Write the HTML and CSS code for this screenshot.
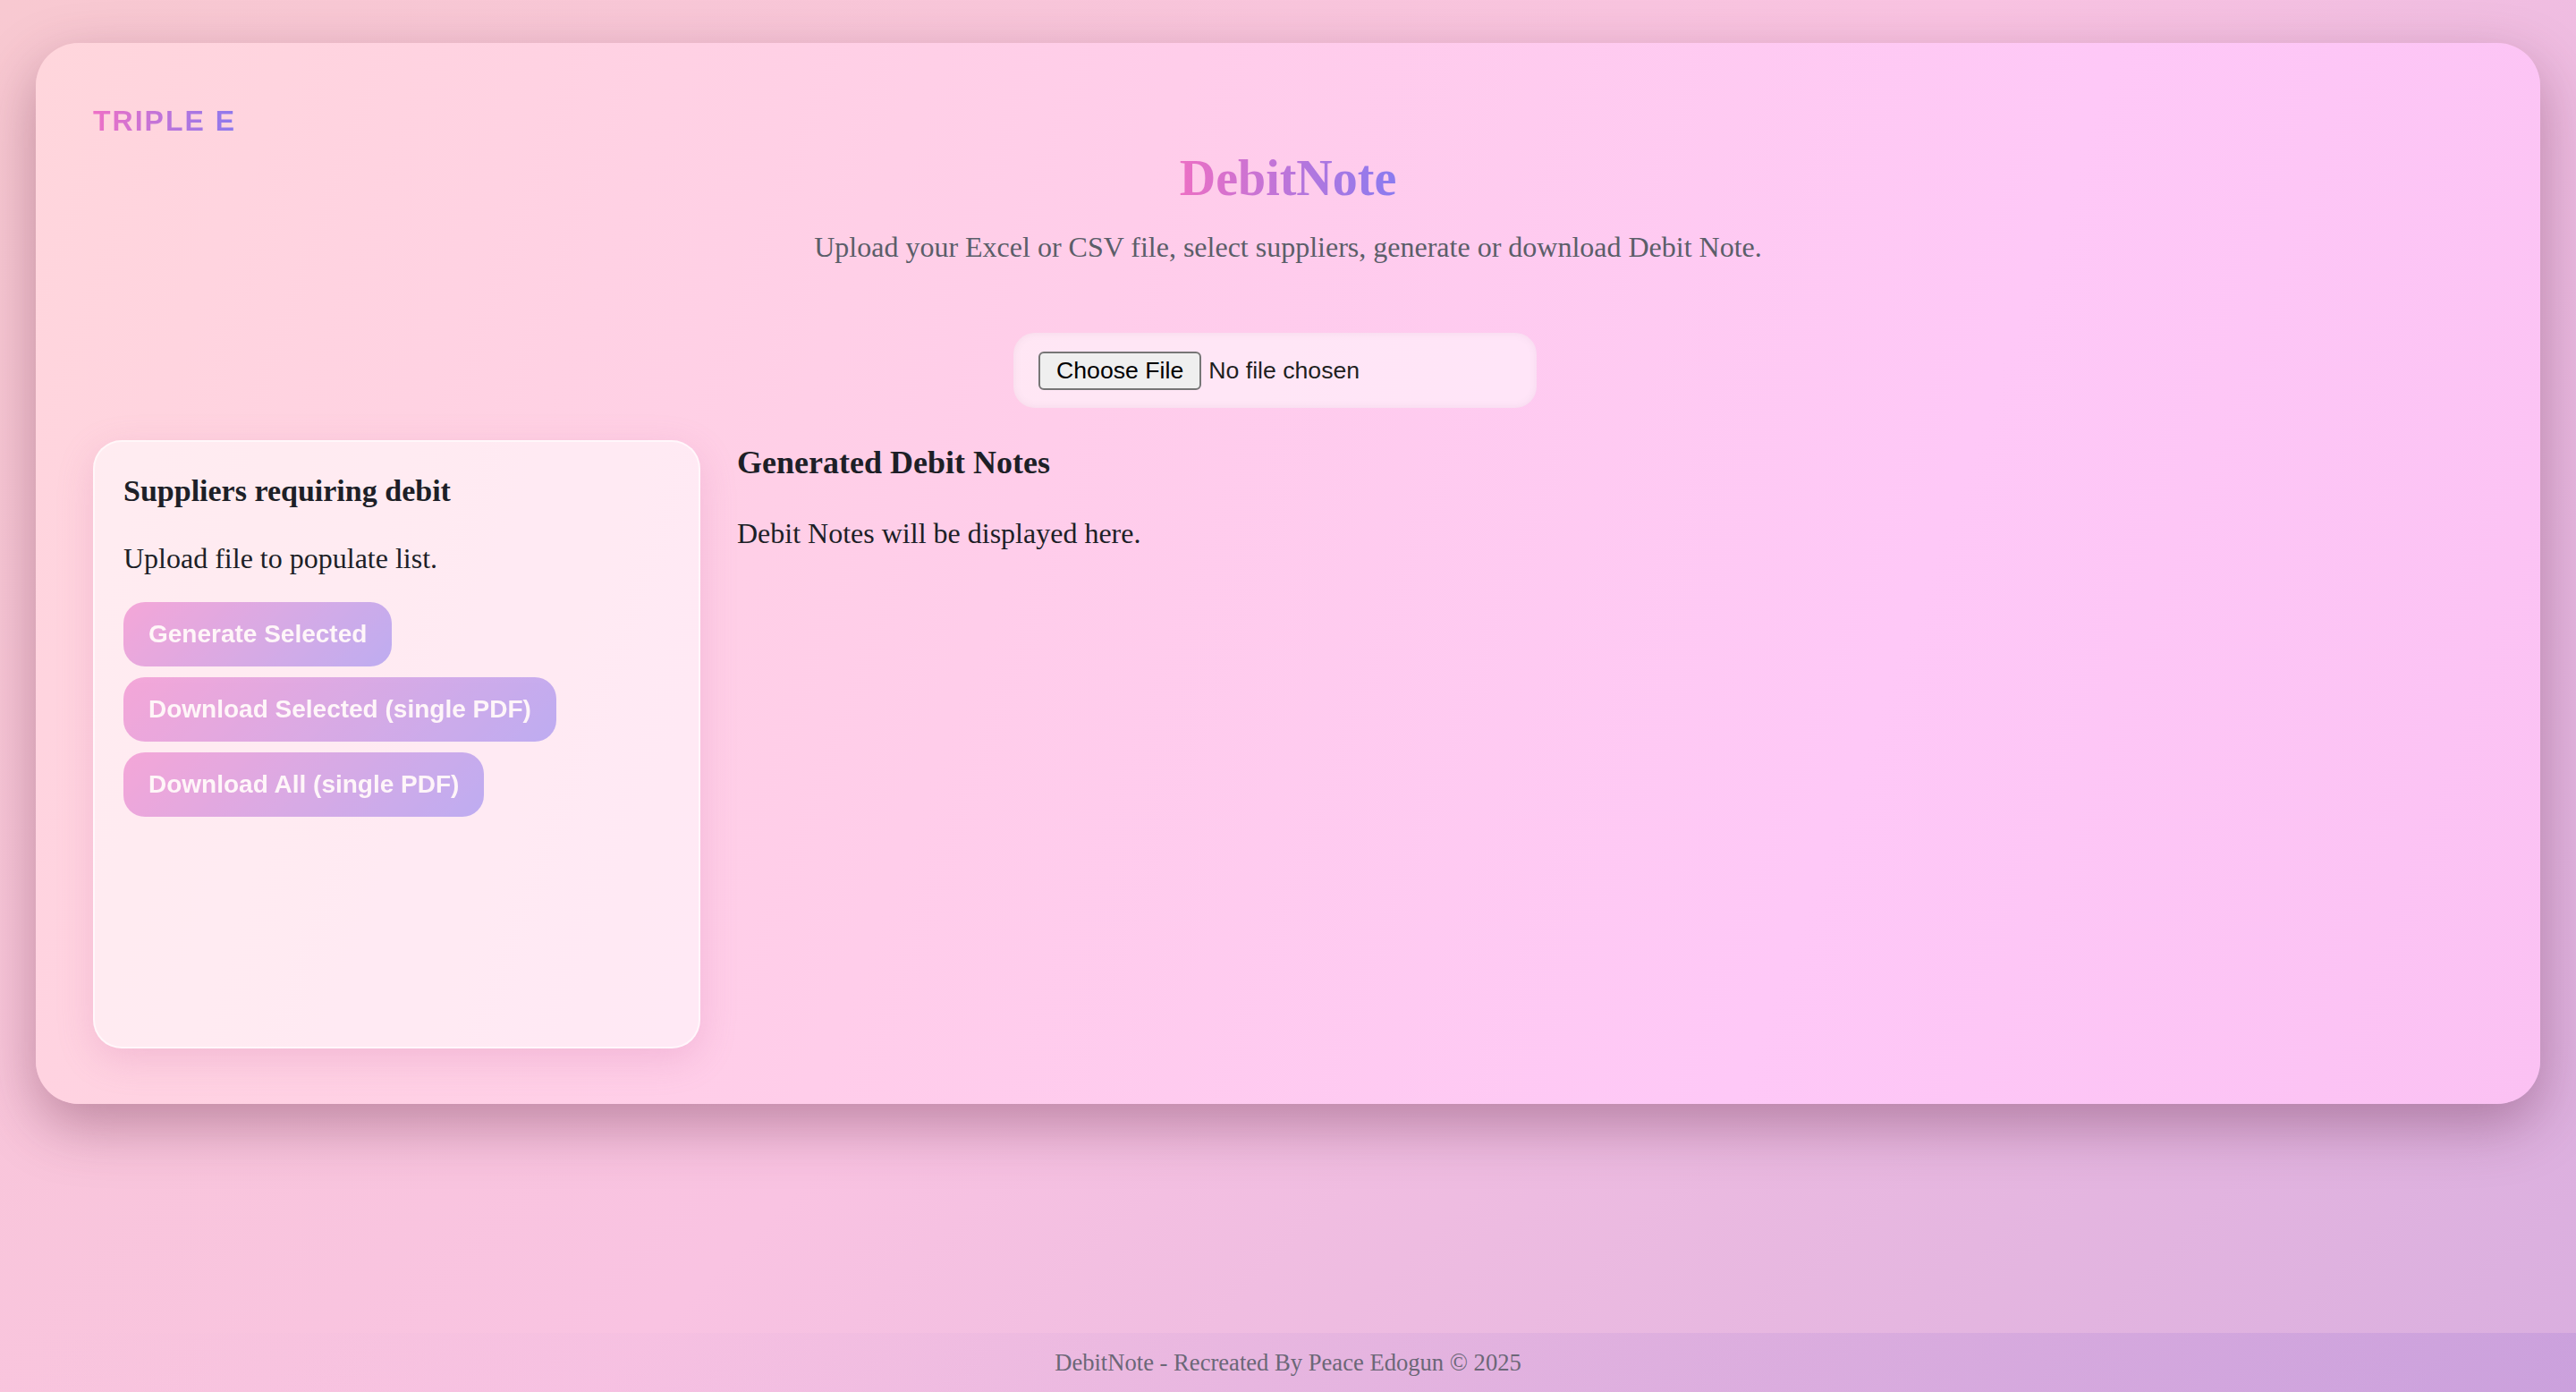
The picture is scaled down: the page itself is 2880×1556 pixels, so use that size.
FILE: index.html
```html
<!DOCTYPE html>
<html lang="en">
<head>
<meta charset="utf-8">
<title>DebitNote</title>
<link rel="stylesheet" href="styles.css">
</head>
<body>
<main class="card">
  <div class="brand">TRIPLE E</div>
  <header class="hero">
    <h1 class="title">DebitNote</h1>
    <p class="subtitle">Upload your Excel or CSV file, select suppliers, generate or download Debit Note.</p>
  </header>
  <div class="upload-row">
    <label class="upload">
      <input type="file" class="file-input" accept=".xlsx,.xls,.csv">
      <span class="file-btn">Choose File</span>
      <span class="file-name">No file chosen</span>
    </label>
  </div>
  <div class="layout">
    <aside class="panel">
      <h3 class="panel-title">Suppliers requiring debit</h3>
      <p class="panel-text">Upload file to populate list.</p>
      <div class="actions">
        <button class="btn" type="button" disabled>Generate Selected</button>
        <button class="btn" type="button" disabled>Download Selected (single PDF)</button>
        <button class="btn" type="button" disabled>Download All (single PDF)</button>
      </div>
    </aside>
    <section class="results">
      <h3 class="results-title">Generated Debit Notes</h3>
      <p class="results-text">Debit Notes will be displayed here.</p>
    </section>
  </div>
</main>
<footer class="footer">DebitNote - Recreated By Peace Edogun © 2025</footer>
</body>
</html>
```

FILE: styles.css
```css
* {
  box-sizing: border-box;
}

html,
body {
  height: 100%;
}

body {
  margin: 0;
  min-height: 100vh;
  display: flex;
  flex-direction: column;
  font-family: "Liberation Serif", "Times New Roman", serif;
  color: #1d1f27;
  background: linear-gradient(135deg, #f8c9d1 0%, #f9c3e2 50%, #d9aedf 100%);
}

.card {
  margin: 48px 40px 0;
  padding: 64px 64px 62px;
  border-radius: 48px;
  background: linear-gradient(110deg, #ffd6dc 0%, #ffcdea 40%, #fec8f7 72%, #fbc1f3 100%);
  box-shadow: 0 24px 64px rgba(90, 30, 60, 0.37);
}

.brand {
  width: fit-content;
  font-family: "Liberation Sans", Arial, sans-serif;
  font-weight: 700;
  font-size: 32px;
  line-height: 46px;
  letter-spacing: 2px;
  background: linear-gradient(90deg, #ee70c6, #8c79ee);
  -webkit-background-clip: text;
  background-clip: text;
  color: transparent;
}

.hero {
  margin-top: 10px;
  text-align: center;
}

.title {
  width: fit-content;
  margin: 0 auto;
  font-size: 56px;
  line-height: 62px;
  font-weight: 700;
  background: linear-gradient(90deg, #ec6fc4, #8a7bf0);
  -webkit-background-clip: text;
  background-clip: text;
  color: transparent;
}

.subtitle {
  margin: 28.5px 0 0;
  font-size: 32px;
  line-height: 35px;
  color: #5b5e69;
}

.upload-row {
  display: flex;
  justify-content: center;
  margin-top: 78.5px;
}

.upload {
  display: flex;
  align-items: center;
  width: 585px;
  height: 84px;
  padding: 20px 28px;
  margin-right: 29px;
  border-radius: 24px;
  background: rgba(255, 255, 255, 0.5);
  box-shadow: inset 0 0 10px rgba(120, 80, 100, 0.08);
  cursor: pointer;
}

.file-input {
  display: none;
}

.file-btn {
  font-family: "Liberation Sans", Arial, sans-serif;
  font-size: 26.67px;
  line-height: 31px;
  padding: 4px 18px;
  border: 2px solid #767676;
  border-radius: 6px;
  background: #efefef;
  color: #000;
}

.file-name {
  margin-left: 8px;
  font-family: "Liberation Sans", Arial, sans-serif;
  font-size: 26.67px;
  color: #1f1f1f;
}

.layout {
  display: grid;
  grid-template-columns: 679px 1fr;
  column-gap: 41px;
  margin-top: 36px;
  align-items: start;
}

.panel {
  min-height: 680px;
  padding: 36px 32px 32px;
  border: 2px solid rgba(255, 255, 255, 0.6);
  border-radius: 32px;
  background: rgba(255, 255, 255, 0.55);
  box-shadow: 0 12px 40px rgba(200, 100, 160, 0.22);
}

.panel-title {
  margin: 0 0 39px;
  font-size: 34px;
  line-height: 38px;
  font-weight: 700;
}

.panel-text {
  margin: 0 0 31px;
  font-size: 32px;
  line-height: 35px;
}

.actions {
  display: flex;
  flex-direction: column;
  align-items: flex-start;
  gap: 12px;
}

.btn {
  font-family: "Liberation Sans", Arial, sans-serif;
  font-weight: 700;
  font-size: 28px;
  line-height: 32px;
  color: #fff;
  padding: 20px 28px;
  border: 0;
  border-radius: 24px;
  background: linear-gradient(135deg, #ec6fc4, #8a7bf0);
  opacity: 0.55;
}

.results {
  padding-top: 5px;
}

.results-title {
  margin: 0;
  font-size: 36px;
  line-height: 40px;
  font-weight: 700;
}

.results-text {
  margin: 41.5px 0 0;
  font-size: 32px;
  line-height: 35px;
}

.footer {
  margin-top: auto;
  height: 66px;
  display: flex;
  align-items: center;
  justify-content: center;
  font-size: 26.6px;
  color: #6b6777;
  background: linear-gradient(90deg, rgba(170, 130, 215, 0) 0%, rgba(170, 130, 215, 0.05) 35%, rgba(170, 130, 215, 0.3) 100%);
}
```
